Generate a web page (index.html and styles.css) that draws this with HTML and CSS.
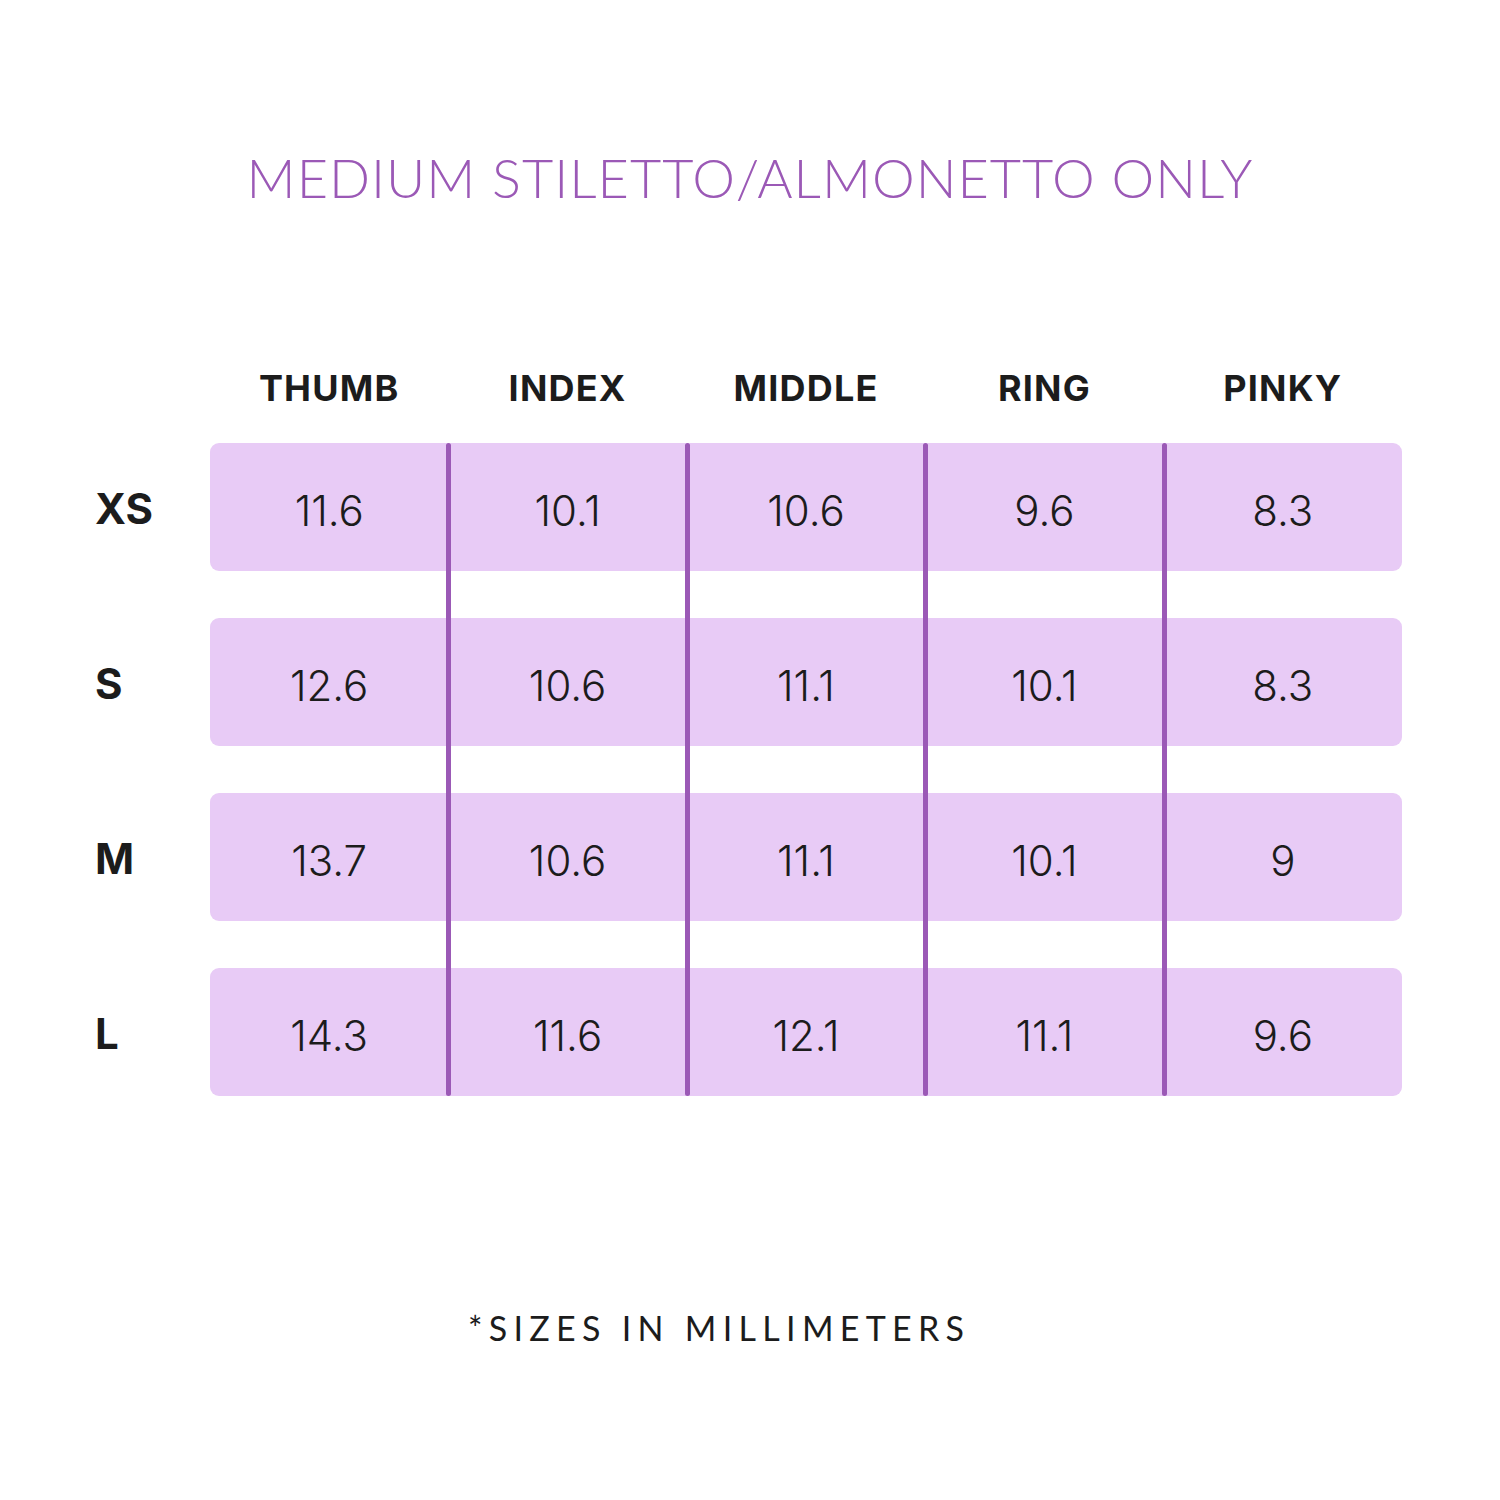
FILE: index.html
```html
<!DOCTYPE html>
<html lang="en">
<head>
<meta charset="utf-8">
<title>Medium Stiletto/Almonetto Only</title>
<link rel="stylesheet" href="styles.css">
</head>
<body>
<main class="page">
  <h1 class="title">MEDIUM STILETTO/ALMONETTO ONLY</h1>

  <section class="chart">
    <div class="head-row">
      <div class="label-col"></div>
      <div class="heads">
        <div class="head">THUMB</div>
        <div class="head">INDEX</div>
        <div class="head">MIDDLE</div>
        <div class="head">RING</div>
        <div class="head">PINKY</div>
      </div>
    </div>

    <div class="body">
      <div class="rows">
        <div class="line">
          <div class="label-col size">XS</div>
          <div class="bar">
            <div class="cell">11.6</div><div class="cell">10.1</div><div class="cell">10.6</div><div class="cell">9.6</div><div class="cell">8.3</div>
          </div>
        </div>
        <div class="line">
          <div class="label-col size">S</div>
          <div class="bar">
            <div class="cell">12.6</div><div class="cell">10.6</div><div class="cell">11.1</div><div class="cell">10.1</div><div class="cell">8.3</div>
          </div>
        </div>
        <div class="line">
          <div class="label-col size">M</div>
          <div class="bar">
            <div class="cell">13.7</div><div class="cell">10.6</div><div class="cell">11.1</div><div class="cell">10.1</div><div class="cell">9</div>
          </div>
        </div>
        <div class="line">
          <div class="label-col size">L</div>
          <div class="bar">
            <div class="cell">14.3</div><div class="cell">11.6</div><div class="cell">12.1</div><div class="cell">11.1</div><div class="cell">9.6</div>
          </div>
        </div>
      </div>
      <div class="dividers">
        <span class="divider"></span><span class="divider"></span><span class="divider"></span><span class="divider"></span><span class="divider last"></span>
      </div>
    </div>
  </section>

  <p class="note">*SIZES IN MILLIMETERS</p>
</main>
</body>
</html>
```

FILE: styles.css
```css
html, body {
  margin: 0;
  padding: 0;
  background: #ffffff;
}

.page {
  width: 1500px;
  height: 1500px;
  box-sizing: border-box;
  padding-top: 148px;
  font-family: "Lato", "Liberation Sans", sans-serif;
  color: #1c1c1c;
}

.title {
  margin: 0;
  text-align: center;
  font-family: "Lato", "Liberation Sans", sans-serif;
  font-weight: 300;
  font-size: 54px;
  line-height: 60px;
  letter-spacing: 1px;
  color: #9b59b6;
}

.chart {
  margin-top: 160px;
}

.head-row {
  display: flex;
  height: 40px;
}

.label-col {
  width: 210px;
  flex: none;
  box-sizing: border-box;
  padding-left: 95px;
}

.heads {
  width: 1192px;
  display: grid;
  grid-template-columns: repeat(5, 1fr);
}

.head {
  text-align: center;
  font-family: "Inter", "DejaVu Sans", sans-serif;
  font-weight: 700;
  font-size: 36px;
  line-height: 40px;
  letter-spacing: 1.2px;
  color: #1c1c1c;
}

.body {
  position: relative;
  margin-top: 35px;
}

.rows {
  display: flex;
  flex-direction: column;
  gap: 47px;
}

.line {
  display: flex;
  align-items: center;
}

.size {
  font-family: "Inter", "DejaVu Sans", sans-serif;
  font-weight: 700;
  font-size: 42px;
  line-height: 42px;
  color: #1c1c1c;
  position: relative;
  top: 2px;
}

.bar {
  width: 1192px;
  height: 128px;
  background: #e8cbf6;
  border-radius: 9px;
  display: grid;
  grid-template-columns: repeat(5, 1fr);
  align-items: center;
}

.cell {
  text-align: center;
  font-family: "Inter", "Lato", sans-serif;
  font-weight: 300;
  font-size: 42px;
  line-height: 42px;
  color: #1c1c1c;
  padding-top: 8px;
}

.dividers {
  position: absolute;
  top: 0;
  bottom: 0;
  left: 210px;
  width: 1192px;
  display: grid;
  grid-template-columns: repeat(5, 1fr);
  pointer-events: none;
}

.divider {
  position: relative;
}

.divider::after {
  content: "";
  position: absolute;
  top: 0;
  bottom: 0;
  right: -3px;
  width: 5px;
  border-radius: 3px;
  background: #9b59b6;
}

.divider.last::after {
  display: none;
}

.note {
  margin: 212px 0 0 0;
  padding-left: 468px;
  font-family: "Lato", "Liberation Sans", sans-serif;
  font-weight: 400;
  font-size: 34px;
  line-height: 40px;
  letter-spacing: 6.3px;
  color: #1c1c1c;
}
```
